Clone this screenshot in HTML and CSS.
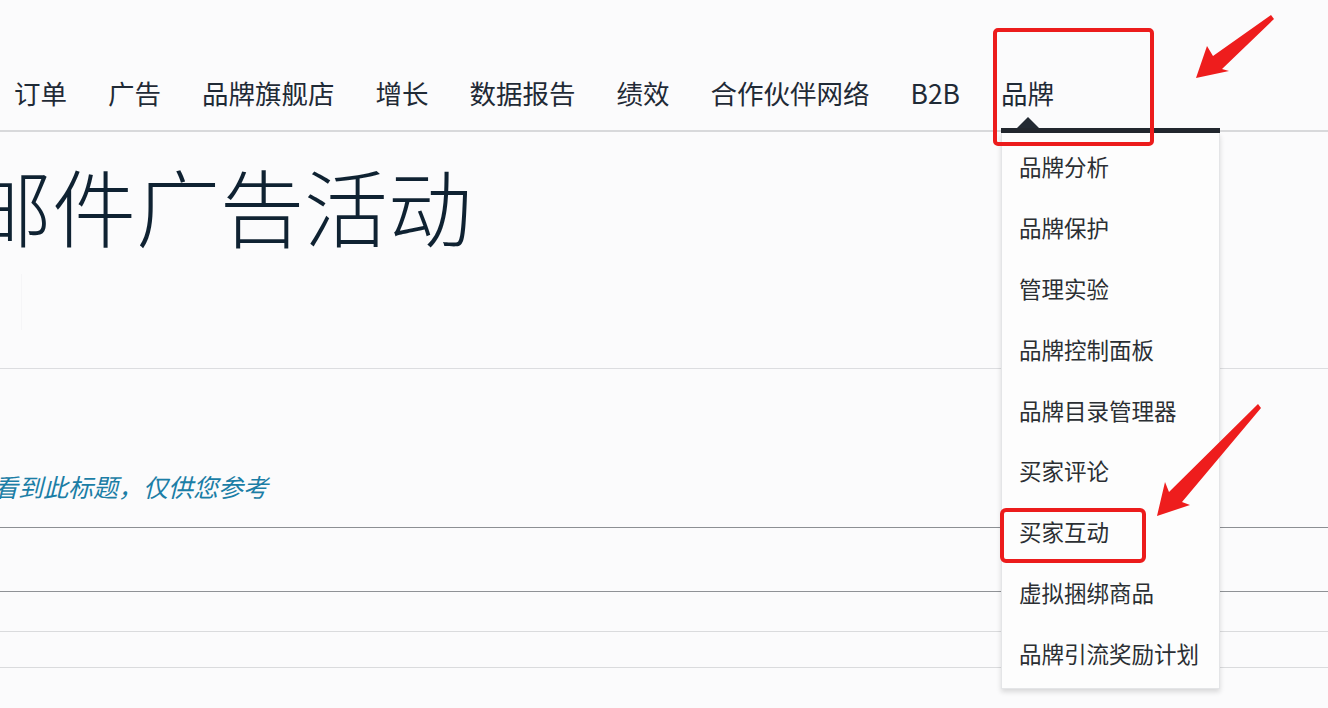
FILE: index.html
```html
<!DOCTYPE html>
<html lang="zh-CN">
<head>
<meta charset="utf-8">
<title>邮件广告活动</title>
<link rel="stylesheet" href="styles.css">
</head>
<body>
<div class="page">
  <header class="topnav">
    <ul class="nav-list">
      <li class="nav-item">订单</li>
      <li class="nav-item">广告</li>
      <li class="nav-item">品牌旗舰店</li>
      <li class="nav-item">增长</li>
      <li class="nav-item">数据报告</li>
      <li class="nav-item">绩效</li>
      <li class="nav-item">合作伙伴网络</li>
      <li class="nav-item">B2B</li>
      <li class="nav-item active">品牌
        <span class="caret"></span>
        <span class="active-bar"></span>
        <ul class="dropdown">
          <li>品牌分析</li>
          <li>品牌保护</li>
          <li>管理实验</li>
          <li>品牌控制面板</li>
          <li>品牌目录管理器</li>
          <li>买家评论</li>
          <li>买家互动</li>
          <li>虚拟捆绑商品</li>
          <li>品牌引流奖励计划</li>
        </ul>
      </li>
    </ul>
  </header>

  <section class="title-section">
    <h1 class="page-title">邮件广告活动</h1>
    <span class="faint-rule"></span>
  </section>

  <section class="note-section">
    <p class="note">看到此标题，仅供您参考</p>
  </section>
  <div class="row row-dark"></div>
  <div class="row row-light1"></div>
  <div class="row row-light2"></div>

  <div class="annot box-brand"></div>
  <div class="annot box-interact"></div>
  <svg class="annot arrows" width="1328" height="708" viewBox="0 0 1328 708">
    <polygon points="1196,78 1207,46 1213,56 1271,15 1274,19 1222,69 1229,71" fill="#ee1d1d"/>
    <polygon points="1157,516 1165,482 1169,492 1258,404 1261,408 1182,502 1190,505" fill="#ee1d1d"/>
  </svg>
</div>
</body>
</html>
```

FILE: styles.css
```css
* { box-sizing: border-box; }
html, body {
  margin: 0;
  padding: 0;
  background: #fbfbfc;
  overflow: hidden;
}
body {
  width: 1328px;
  height: 708px;
  font-family: "Noto Sans CJK SC", "Noto Sans", sans-serif;
  color: #1d2733;
}
.page {
  position: relative;
  width: 1328px;
  height: 708px;
  overflow: hidden;
}

/* top navigation */
.topnav {
  height: 132px;
  border-bottom: 2px solid #d8d9db;
}
.nav-list {
  list-style: none;
  margin: 0;
  padding: 75px 0 0 14px;
  display: flex;
  gap: 41px;
}
.nav-item {
  font-size: 26.5px;
  line-height: 36px;
  color: #1f2a36;
  white-space: nowrap;
}
.nav-item.active {
  position: relative;
}
.caret {
  position: absolute;
  left: 16px;
  top: 42px;
  width: 0;
  height: 0;
  border-left: 11px solid transparent;
  border-right: 11px solid transparent;
  border-bottom: 11px solid #232a33;
}
.active-bar {
  position: absolute;
  left: 0;
  top: 53px;
  width: 219px;
  height: 5px;
  background: #22272e;
}
.dropdown {
  position: absolute;
  left: 0;
  top: 58px;
  width: 219px;
  margin: 0;
  padding: 3px 0 4px;
  list-style: none;
  background: #fdfdfd;
  border: 1px solid #e4e5e7;
  border-top: none;
  box-shadow: 0 3px 5px rgba(0, 0, 0, 0.14);
  z-index: 2;
}
.dropdown li {
  height: 60.9px;
  line-height: 60.9px;
  padding-left: 17px;
  font-size: 22.5px;
  color: #2b2f33;
}

/* title */
.title-section {
  position: relative;
  height: 237px;
  border-bottom: 1px solid #dcdde0;
}
.page-title {
  margin: 0;
  padding-top: 20px;
  margin-left: -32px;
  font-size: 84px;
  line-height: 106px;
  font-weight: 300;
  color: #0f2232;
  white-space: nowrap;
}
.faint-rule {
  position: absolute;
  left: 21px;
  top: 142px;
  width: 1px;
  height: 56px;
  background: #f5f5f7;
}

/* note */
.note-section {
  height: 159px;
  border-bottom: 1.5px solid #8c8f93;
  padding-top: 102px;
}
.note {
  margin: 0 0 0 -7px;
  font-size: 25px;
  line-height: 30px;
  font-style: italic;
  color: #1b7ea6;
  white-space: nowrap;
}
.row-dark {
  height: 64px;
  border-bottom: 1.5px solid #8f9296;
}
.row-light1 {
  height: 40px;
  border-bottom: 1.5px solid #dadbdd;
}
.row-light2 {
  height: 36px;
  border-bottom: 1.5px solid #dadbdd;
}

/* annotations */
.annot {
  position: absolute;
  z-index: 5;
}
.box-brand {
  left: 993px;
  top: 28px;
  width: 161px;
  height: 118px;
  border: 4px solid #ec1c1c;
  border-radius: 5px;
}
.box-interact {
  left: 1000px;
  top: 508px;
  width: 146px;
  height: 55px;
  border: 4px solid #ec1c1c;
  border-radius: 6px;
}
.arrows {
  left: 0;
  top: 0;
  pointer-events: none;
}
```
